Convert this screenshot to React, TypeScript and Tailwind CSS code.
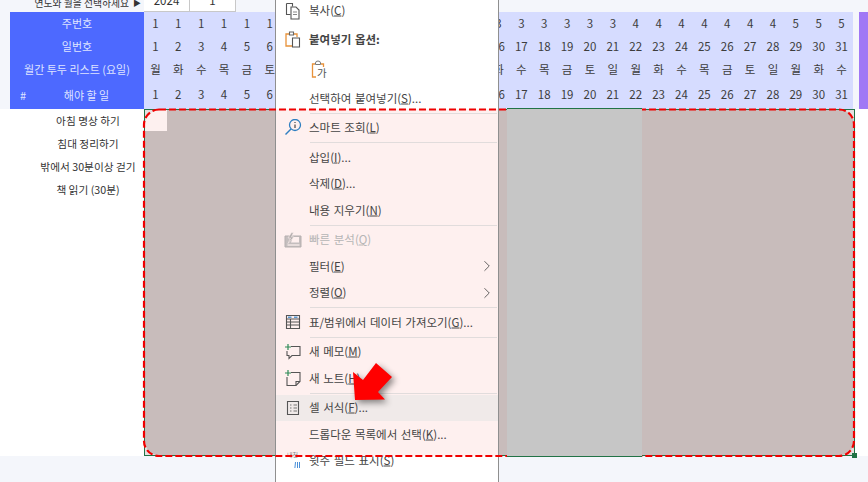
import React from 'react';
import { ChevronRight } from 'lucide-react';

const days = Array.from({ length: 31 }, (_, i) => i + 1);
const weekNames = ['월', '화', '수', '목', '금', '토', '일'];

// days 7-15 sit behind the context menu, so they stay empty
const visible = (d: number, v: string | number) => (d > 6 && d < 16 ? '' : v);

function DayRow({ h, values }: { h: string; values: (string | number)[] }) {
  return (
    <div className={`grid grid-cols-[repeat(31,minmax(0,1fr))] items-center ${h}`}>
      {values.map((v, i) => (
        <span key={i} className="text-center text-[11.5px] text-[#3d3d3d]">
          {v}
        </span>
      ))}
    </div>
  );
}

function Sep() {
  return <div className="ml-[34px] mr-[1px] my-[0.9px] h-px bg-[#e1dcdc] shrink-0" />;
}

function Item({
  children,
  icon,
  arrow,
  active,
  muted,
  h = 'h-[26.6px]',
}: {
  children?: React.ReactNode;
  icon?: React.ReactNode;
  arrow?: boolean;
  active?: boolean;
  muted?: boolean;
  h?: string;
}) {
  return (
    <div className={`flex items-center shrink-0 ${h} ${active ? 'bg-[#f0eae9]' : ''} ${muted ? 'text-[#b5b5b5]' : 'text-[#444]'}`}>
      <div className="w-[33px] flex justify-center shrink-0">{icon}</div>
      <span className="flex-1 text-[11.5px] [word-spacing:1px] -translate-y-[0.5px]">{children}</span>
      {arrow && <ChevronRight className="w-[18px] h-[18px] mr-[2px] text-[#444]" strokeWidth={1.1} />}
    </div>
  );
}

const U = ({ children }: { children: React.ReactNode }) => <span className="underline">{children}</span>;

const CopyIcon = (
  <svg width="18" height="18" viewBox="0 0 18 18" fill="none" stroke="#555" strokeWidth="1.1">
    <path d="M2.5 1.5h6v3M2.5 1.5v11h4" />
    <path d="M7 5h5l3 3v9H7z" fill="#fff" />
    <path d="M9 10h4M9 12.500h4" stroke="#888" />
  </svg>
);

const PasteIcon = (
  <svg width="18" height="18" viewBox="0 0 18 18" fill="none">
    <path d="M5 3H2v12h6" stroke="#e8923a" strokeWidth="1.3" />
    <path d="M10 3h3v3" stroke="#e8923a" strokeWidth="1.3" />
    <path d="M5.500 1h4v3h-4z" stroke="#666" strokeWidth="1.1" />
    <path d="M8.500 7h7v9h-7z" fill="#fff" stroke="#555" strokeWidth="1.1" />
  </svg>
);

const PasteTextIcon = (
  <svg width="20" height="20" viewBox="0 0 20 20" fill="none">
    <path d="M5 4H2.500v13H6" stroke="#e8923a" strokeWidth="1.3" />
    <path d="M11 4h2.500v3" stroke="#e8923a" strokeWidth="1.3" />
    <path d="M5.500 4.500V3a2.500 2 0 0 1 5 0v1.500z" stroke="#777" strokeWidth="1" />
    <text x="7" y="17" fontSize="10.500" fill="#555" fontFamily="'Noto Sans CJK KR'">가</text>
  </svg>
);

const LookupIcon = (
  <svg width="18" height="18" viewBox="0 0 18 18" fill="none">
    <circle cx="11" cy="6" r="5.500" stroke="#2f7fc1" strokeWidth="1.300" />
    <path d="M7 10 1.500 15.500" stroke="#2f7fc1" strokeWidth="1.500" />
    <path d="M11 3v1M11 5.500v3.500" stroke="#444" strokeWidth="1.200" />
  </svg>
);

const QuickIcon = (
  <svg width="18" height="18" viewBox="0 0 18 18" fill="none">
    <path d="M1 5h16v11H1z" fill="#c4bebe" stroke="#b5afaf" />
    <path d="M9 6h6v5.500H7z" fill="#fef0ef" />
    <path d="M3.500 14h12" stroke="#fef0ef" strokeWidth="1.200" />
    <path d="M7.500 1.500 4 7h2.500L4 12.500 10 6H7.500l2-4.500z" fill="#b5afaf" stroke="#fef0ef" strokeWidth=".6" />
  </svg>
);

const TableIcon = (
  <svg width="16" height="16" viewBox="0 0 16 16" fill="none" stroke="#555" strokeWidth="1.100">
    <path d="M1.500 1.500h13v13h-13z" />
    <path d="M1.500 5h13M1.500 8h13M1.500 11h13M5.500 5v9.500" />
    <path d="M3 3.200h3.500M9 3.200h3.500" stroke="#5a9bd4" strokeWidth="1.400" />
  </svg>
);

const MemoIcon = (
  <svg width="18" height="18" viewBox="0 0 18 18" fill="none">
    <path d="M7 3.500h9v9H8l-3 3v-3H3V8" stroke="#555" strokeWidth="1.100" />
    <path d="M4 1v6M1 4h6" stroke="#2e8b57" strokeWidth="1.200" />
  </svg>
);

const NoteIcon = (
  <svg width="18" height="18" viewBox="0 0 18 18" fill="none">
    <path d="M7 3.500h9v9l-4 4H3V8" stroke="#555" strokeWidth="1.100" />
    <path d="M16 12.500h-4v4" stroke="#555" strokeWidth="1.100" />
    <path d="M4 1v6M1 4h6" stroke="#2e8b57" strokeWidth="1.200" />
  </svg>
);

const FormatIcon = (
  <svg width="14" height="16" viewBox="0 0 14 16" fill="none" stroke="#555" strokeWidth="1.100">
    <path d="M1.500 1.500h11v13h-11z" />
    <path d="M4 5h1.500M4 8h1.500M4 11h1.500M7.500 5H11M7.500 8H11M7.500 11H11" stroke="#777" />
  </svg>
);

const PhoneticIcon = (
  <svg width="18" height="18" viewBox="0 0 18 18" fill="none">
    <text x="3" y="5" fontSize="6" fill="#888" fontFamily="'Noto Sans CJK KR'">내천</text>
    <path d="M11.500 10l-.6 6M13.500 10v6M15.500 10v6" stroke="#4a90d9" strokeWidth="1" />
  </svg>
);

export default function App() {
  return (
    <div className="relative w-[868px] h-[482px] overflow-hidden bg-[#f4f6fb] flex flex-col font-['Noto_Sans_CJK_KR','Noto_Sans',sans-serif]">
      {/* clipped input row */}
      <div className="h-3 shrink-0 flex items-end overflow-hidden pl-[10px]">
        <div className="w-[134px] h-[20px] shrink-0 flex items-center justify-end pr-[3px] text-[9.8px] text-[#333] translate-y-[1px]">
          연도와 월을 선택하세요 <span className="ml-[4px] text-[8px]">▶</span>
        </div>
        <div className="w-[46px] h-[22px] shrink-0 bg-white border-r border-b border-[#c8c8c8] flex items-center justify-center text-[11.5px] text-[#333]">
          2024
        </div>
        <div className="w-[46px] h-[22px] shrink-0 bg-white border-r border-b border-[#c8c8c8] flex items-center justify-center text-[11.5px] text-[#333]">
          1
        </div>
      </div>

      {/* header */}
      <div className="flex h-[97px] shrink-0 pl-[10px]">
        <div className="w-[134px] shrink-0 bg-[#4d69ff] text-[#dfe4ff] text-[11px]">
          <div className="h-[23px] flex items-center justify-center">주번호</div>
          <div className="h-[23px] flex items-center justify-center">일번호</div>
          <div className="h-[23px] flex items-center justify-center">월간 투두 리스트 (요일)</div>
          <div className="h-[28px] flex items-center pl-[10px] pr-[23px]">
            <span className="w-[32px]">#</span>
            <span className="flex-1 text-center">해야 할 일</span>
          </div>
        </div>
        <div className="w-[709px] shrink-0 bg-[#d6dcff]">
          <DayRow h="h-[23px]" values={days.map((d) => visible(d, Math.ceil(d / 7)))} />
          <DayRow h="h-[23px]" values={days.map((d) => visible(d, d))} />
          <DayRow h="h-[23px]" values={days.map((d) => visible(d, weekNames[(d - 1) % 7]))} />
          <DayRow h="h-[28px]" values={days.map((d) => visible(d, d))} />
        </div>
        <div className="w-[9px] ml-[6px] shrink-0 bg-[#a078f5]" />
      </div>

      {/* body */}
      <div className="flex h-[347px] shrink-0 bg-white">
        <div className="w-[144px] shrink-0 pl-[32px] pt-[1px] text-[10.7px] text-[#333]">
          {['아침 명상 하기', '침대 정리하기', '밖에서 30분이상 걷기', '책 읽기 (30분)'].map((t) => (
            <div key={t} className="h-[23px] flex items-center justify-center whitespace-nowrap">
              {t}
            </div>
          ))}
        </div>
        <div className="relative w-[711px] shrink-0 border-[1.5px] border-[#217346] bg-[#e4e0e0]">
          <div className="h-full rounded-[14px] overflow-hidden bg-[#c8bcbb]">
            <div className="w-[22px] h-[21px] bg-[#fdf0ef]" />
          </div>
          <div className="absolute right-[-3px] bottom-[-3px] w-[5px] h-[5px] bg-[#217346]" />
        </div>
      </div>

      {/* context menu */}
      <div className="absolute left-[275px] top-[-3px] w-[224px] h-[490px] pt-[0.7px] bg-white border-x border-[#8f8f8f] flex flex-col">
        <div className="absolute inset-x-0 top-[112px] h-[347px] bg-[#fef0ef]" />
        <div className="relative flex flex-col">
          <Item icon={CopyIcon}>복사(<U>C</U>)</Item>
          <Item icon={PasteIcon} h="h-[31px]"><span className="font-bold">붙여넣기 옵션:</span></Item>
          <div className="flex items-center h-[30px] shrink-0 pl-[34px]">{PasteTextIcon}</div>
          <Item>선택하여 붙여넣기(<U>S</U>)...</Item>
          <Sep />
          <Item icon={LookupIcon}>스마트 조회(<U>L</U>)</Item>
          <Sep />
          <Item>삽입(<U>I</U>)...</Item>
          <Item>삭제(<U>D</U>)...</Item>
          <Item>내용 지우기(<U>N</U>)</Item>
          <Sep />
          <Item icon={QuickIcon} muted>빠른 분석(<U>Q</U>)</Item>
          <Item arrow>필터(<U>E</U>)</Item>
          <Item arrow>정렬(<U>O</U>)</Item>
          <Sep />
          <Item icon={TableIcon}>표/범위에서 데이터 가져오기(<U>G</U>)...</Item>
          <Sep />
          <Item icon={MemoIcon}>새 메모(<U>M</U>)</Item>
          <Item icon={NoteIcon}>새 노트(<U>H</U>)</Item>
          <Sep />
          <Item icon={FormatIcon} active>셀 서식(<U>F</U>)...</Item>
          <Item>드롭다운 목록에서 선택(<U>K</U>)...</Item>
          <Item icon={PhoneticIcon}>윗주 필드 표시(<U>S</U>)</Item>
        </div>
      </div>

      {/* dashed annotation */}
      <svg className="absolute left-0 top-0 pointer-events-none" width="868" height="482" fill="none">
        <rect x="144" y="109.500" width="710" height="346.500" rx="15" stroke="#f00000" strokeWidth="2.200" strokeDasharray="7 3" />
        <path d="M355 400 353 372 363 380 376 363 392 377 378 392 385 399.500Z" fill="#ff0000" className="drop-shadow-[3px_3px_3px_rgba(0,0,0,0.45)]" />
      </svg>

      {/* lighter band over the annotation */}
      <div className="absolute left-[507px] top-[108px] w-[135px] h-[349px] bg-[#c6c6c6] border-y-[1.5px] border-[#217346]" />
    </div>
  );
}
